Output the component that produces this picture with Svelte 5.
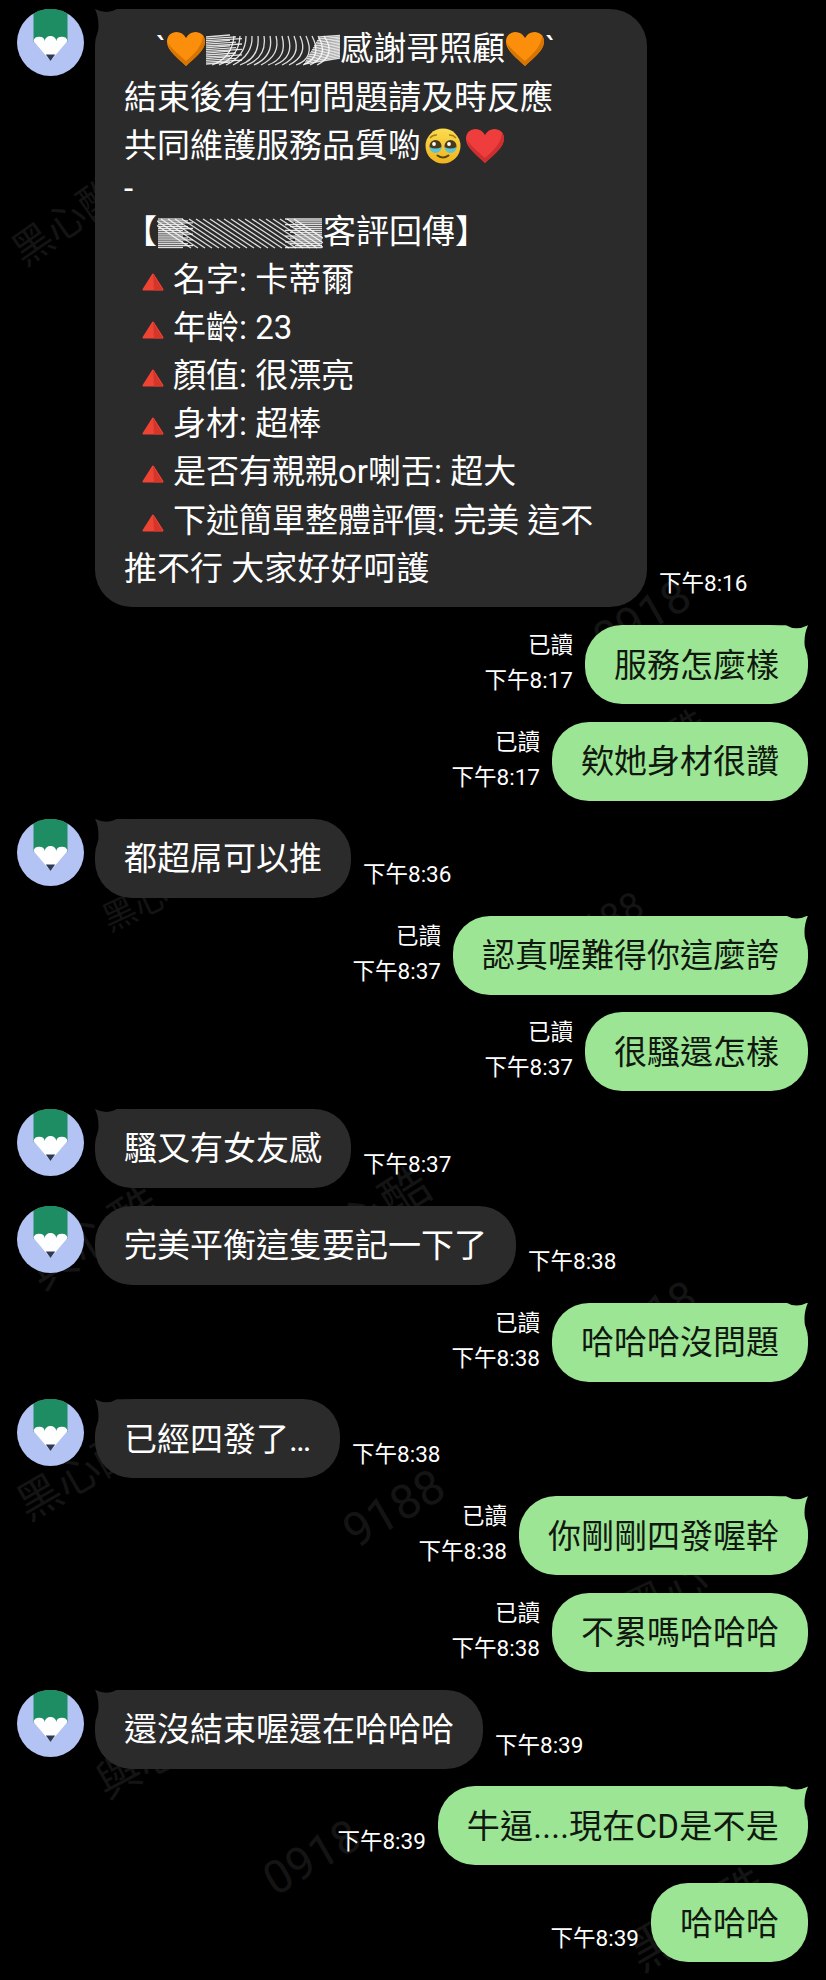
<script>
	// faint watermark pieces behind the chat: x, y, rotation, size, text
	const marks = [
		{ x: 4, y: 190, r: -35, s: 40, t: '黑心酷' },
		{ x: 590, y: 590, r: -30, s: 46, t: '0918' },
		{ x: 590, y: 720, r: -30, s: 40, t: '黑心酷' },
		{ x: 100, y: 880, r: -25, s: 34, t: '黑心' },
		{ x: 560, y: 900, r: -28, s: 38, t: '9188' },
		{ x: 20, y: 1200, r: -32, s: 48, t: '與心酷' },
		{ x: 290, y: 1180, r: -32, s: 48, t: '與心酷' },
		{ x: 600, y: 1290, r: -28, s: 44, t: '0918' },
		{ x: 10, y: 1440, r: -30, s: 44, t: '黑心酷' },
		{ x: 340, y: 1480, r: -30, s: 48, t: '9188' },
		{ x: 620, y: 1560, r: -25, s: 44, t: '黑心' },
		{ x: 90, y: 1720, r: -28, s: 44, t: '與心酷' },
		{ x: 260, y: 1830, r: -30, s: 46, t: '0918' },
		{ x: 620, y: 1880, r: -30, s: 50, t: '黑心酷' }
	];

	// stripes for the two scribbled-out names
	const arcs = Array.from({ length: 16 }, (_, i) => i);
	const strokes = Array.from({ length: 22 }, (_, i) => i);

	const rows = [
		{ me: true, tail: true, read: true, text: '服務怎麼樣', time: '下午8:17' },
		{ me: true, read: true, text: '欸她身材很讚', time: '下午8:17' },
		{ tail: true, text: '都超屌可以推', time: '下午8:36' },
		{ me: true, tail: true, read: true, text: '認真喔難得你這麼誇', time: '下午8:37' },
		{ me: true, read: true, text: '很騷還怎樣', time: '下午8:37' },
		{ tail: true, text: '騷又有女友感', time: '下午8:37' },
		{ text: '完美平衡這隻要記一下了', time: '下午8:38' },
		{ me: true, tail: true, read: true, text: '哈哈哈沒問題', time: '下午8:38' },
		{ tail: true, text: '已經四發了…', time: '下午8:38' },
		{ me: true, tail: true, read: true, text: '你剛剛四發喔幹', time: '下午8:38' },
		{ me: true, read: true, text: '不累嗎哈哈哈', time: '下午8:38' },
		{ tail: true, text: '還沒結束喔還在哈哈哈', time: '下午8:39' },
		{ me: true, tail: true, text: '牛逼....現在CD是不是', time: '下午8:39', loose: true },
		{ me: true, text: '哈哈哈', time: '下午8:39' }
	];

	const review = [
		'名字: 卡蒂爾',
		'年齡: 23',
		'顏值: 很漂亮',
		'身材: 超棒',
		'是否有親親or喇舌: 超大',
		'下述簡單整體評價: 完美 這不'
	];
</script>

{#snippet avatar()}
	<svg class="avatar" viewBox="0 0 67 67" aria-hidden="true">
		<circle cx="33.5" cy="33.5" r="33.5" fill="#b2c3f4" />
		<path d="M16.5 4.4A33.5 33.5 0 0 1 50.5 4.4V33H16.5Z" fill="#1f8d63" />
		<path d="M16.5 32a5.7 5 0 0 1 11.3 0a5.7 5 0 0 1 11.4 0a5.7 5 0 0 1 11.3 0L33.5 52Z" fill="#fff" />
		<path d="M28.8 45.5H38.2L33.5 52Z" fill="#2e3a55" />
	</svg>
{/snippet}

{#snippet heart(fill, shade)}
	<svg class="emoji" viewBox="0 0 40 36" aria-hidden="true">
		<path d="M20 35C12 27 1 20 1 10.500C1 4.500 5.500 1 10.500 1C14.500 1 18 3 20 7C22 3 25.500 1 29.500 1C34.500 1 39 4.500 39 10.500C39 20 28 27 20 35Z" fill={fill} />
		<path d="M20 35C28 27 39 20 39 10.500C39 8 38 6 37 4.500C37 15 27 24 20 30C13 24 5 17 2 12C3 21 13 28 20 35Z" fill={shade} />
	</svg>
{/snippet}

{#snippet triangle()}
	<svg class="tri" viewBox="0 0 22 18" aria-hidden="true">
		<path d="M11 1.500L20.500 16.500H1.500Z" fill="#ee4433" stroke="#ee4433" stroke-width="2" stroke-linejoin="round" />
		<path d="M11 1L21 17.500H12Z" fill="#d5352a" />
	</svg>
{/snippet}

<div class="screen" lang="zh-TW">
	<div class="marks" aria-hidden="true">
		{#each marks as m}
			<span class="mark" style={`left:${m.x}px; top:${m.y}px; font-size:${m.s}px; transform:rotate(${m.r}deg)`}>{m.t}</span>
		{/each}
	</div>

	<div class="chat">
		<div class="row">
			{@render avatar()}
			<div class="bubble tail wide">
				<div class="line first">
					<span>`</span>{@render heart('#fb8f0b', '#d87400')}<svg class="scrawl one" viewBox="0 0 134 32" aria-hidden="true">
						{#each arcs as i}
							<path d={`M${6 + i * 7} 31 Q${26 + i * 7} ${24 - i % 4} ${28 + i * 6} 2`} class="ink" />
						{/each}
						{#each arcs as i}
							<path d={`M0 ${3 + i * 1.8} L${24 + (i % 3) * 6} ${1 + i * 1.8}`} class="ink" />
							<path d={`M${98 + i} ${30 - i * 1.8} L134 ${24 - i * 1.5}`} class="ink" />
						{/each}
					</svg><span>感謝哥照顧</span>{@render heart('#fb8f0b', '#d87400')}<span>`</span>
				</div>
				<div class="line">結束後有任何問題請及時反應</div>
				<div class="line">共同維護服務品質喲<svg class="emoji face" viewBox="0 0 38 36" aria-hidden="true">
						<defs>
							<linearGradient id="face-fill" x1="0" y1="0" x2="0" y2="1">
								<stop offset="0" stop-color="#fbdc4e" />
								<stop offset="1" stop-color="#eeb51f" />
							</linearGradient>
						</defs>
						<circle cx="19" cy="18" r="17.500" fill="url(#face-fill)" />
						<circle cx="11.500" cy="18" r="6" fill="#4a3a1c" />
						<circle cx="26.500" cy="18" r="6" fill="#4a3a1c" />
						<path d="M5.500 19a6 6 0 0 0 12 0q-6 3-12 0ZM20.500 19a6 6 0 0 0 12 0q-6 3-12 0Z" fill="#5cc3d8" />
						<circle cx="10" cy="16" r="1.900" fill="#fff" />
						<circle cx="25" cy="16" r="1.900" fill="#fff" />
						<path d="M13.500 27.500Q19 31.500 24.500 27.500" fill="none" stroke="#5a4513" stroke-width="2" stroke-linecap="round" />
						<path d="M6 10Q9 6.500 13 7M25 7Q29 6.500 32 10" fill="none" stroke="#a67f1c" stroke-width="1.400" />
					</svg>{@render heart('#ef3d3d', '#cf2e2e')}</div>
				<div class="line dash">-</div>
				<div class="line">【<svg class="scrawl two" viewBox="0 0 166 32" aria-hidden="true">
						{#each strokes as i}
							<path d={`M${i * 7 - 10} 2 L${i * 7 + 34} 31`} class="ink" />
						{/each}
						{#each arcs as i}
							<path d={`M1 ${2 + i * 1.9} H${26 + (i % 3) * 5}`} class="ink" />
							<path d={`M${128 + (i % 3) * 5} ${2 + i * 1.9} H165`} class="ink" />
						{/each}
					</svg>客評回傳】</div>
				{#each review as item}
					<div class="line">{@render triangle()}{item}</div>
				{/each}
				<div class="line">推不行 大家好好呵護</div>
			</div>
			<span class="time">下午8:16</span>
		</div>

		{#each rows as row}
			<div class="row" class:me={row.me}>
				{#if row.me}
					<div class="meta">
						{#if row.read}<span>已讀</span>{/if}
						<span>{row.time}</span>
					</div>
					<div class="bubble" class:tail={row.tail}><div class="line" class:loose={row.loose}>{row.text}</div></div>
				{:else}
					{@render avatar()}
					<div class="bubble" class:tail={row.tail}><div class="line">{row.text}</div></div>
					<span class="time">{row.time}</span>
				{/if}
			</div>
		{/each}
	</div>
</div>

<style>
	:global(body) {
		margin: 0;
		background: #000;
	}

	.screen {
		position: relative;
		width: 826px;
		height: 1980px;
		overflow: hidden;
		background: #000;
		font-family: Roboto, "Noto Sans CJK TC", sans-serif;
		color: #fff;
	}

	.marks {
		position: absolute;
		inset: 0;
	}

	.mark {
		position: absolute;
		color: #141414;
		white-space: nowrap;
	}

	.chat {
		position: relative;
		display: flex;
		flex-direction: column;
		gap: 17.8px;
		padding: 9px 18px 0 17px;
	}

	.row {
		display: flex;
		align-items: flex-end;
		gap: 12px;
	}

	.row.me {
		justify-content: flex-end;
		gap: 12px;
	}

	.avatar {
		flex: none;
		align-self: flex-start;
		width: 67px;
		height: 67px;
		margin-right: -1px;
	}

	.bubble {
		position: relative;
		padding: 16.4px 29px 14.4px;
		border-radius: 37px;
		background: #2b2b2b;
		font-size: 33px;
	}

	.bubble.wide {
		box-sizing: border-box;
		width: 552px;
	}

	.me .bubble {
		background: #9ce595;
		color: #10180f;
	}

	.bubble.tail::before {
		content: '';
		position: absolute;
		top: 0;
		left: 0;
		width: 36px;
		height: 36px;
		background: inherit;
		clip-path: path('M36 0H22Q12 6 0 0Q7 15 0 36H36Z');
	}

	.me .bubble.tail::before {
		left: auto;
		right: 0;
		clip-path: path('M0 0H14Q24 6 36 0Q29 15 36 36H0Z');
	}

	.line {
		position: relative;
		height: 48.2px;
		line-height: 48.2px;
		white-space: nowrap;
	}

	.line.first {
		padding-left: 32px;
	}

	.line.dash {
		height: 37.6px;
		line-height: 37.6px;
	}

	.line.loose {
		letter-spacing: 0.25px;
	}

	.emoji {
		display: inline-block;
		width: 40px;
		height: 36px;
		vertical-align: -7px;
	}

	.face {
		width: 38px;
		margin: 0 3px;
	}

	.tri {
		display: inline-block;
		width: 22px;
		height: 18px;
		margin: 0 9px 0 18px;
		vertical-align: 0;
	}

	.scrawl {
		display: inline-block;
		height: 32px;
		vertical-align: -6px;
	}

	.scrawl.one {
		width: 134px;
	}

	.scrawl.two {
		width: 166px;
	}

	.ink {
		fill: none;
		stroke: #fff;
		stroke-width: 1.3;
		stroke-opacity: 0.85;
	}

	.time,
	.meta {
		font-size: 22.5px;
		line-height: 35px;
		white-space: nowrap;
	}

	.time {
		margin-bottom: 6px;
	}

	.meta {
		display: flex;
		flex-direction: column;
		align-items: flex-end;
		margin-bottom: 6px;
	}
</style>
